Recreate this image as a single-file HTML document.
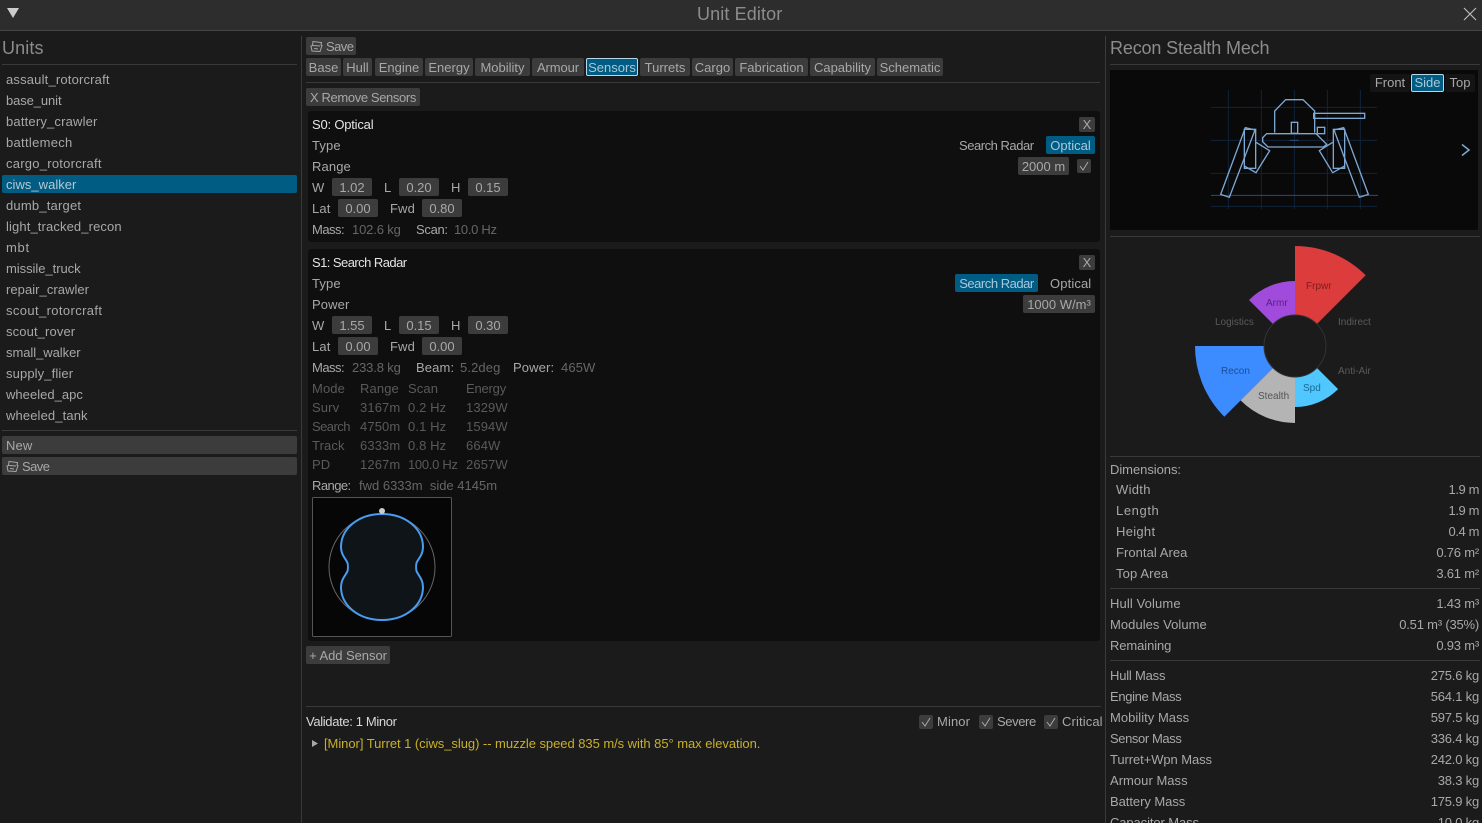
<!DOCTYPE html>
<html><head><meta charset="utf-8"><title>Unit Editor</title>
<style>
html,body{margin:0;padding:0;background:#1b1b1b;width:1482px;height:823px;overflow:hidden}
#r{position:relative;width:1482px;height:823px;overflow:hidden;font:13px/20px "Liberation Sans",sans-serif;color:#a8a8a8}
#r div,#r span,#r svg{position:absolute}
span{white-space:nowrap;letter-spacing:.12px;margin-top:1px}
.b{background:#3c3c3c;border-radius:2px;height:18px;line-height:20px;text-align:center;color:#a8a8a8;overflow:hidden}
.l{background:#3a3a3a;height:1px}
.p{background:#0f0f0f;border-radius:3px}
.w{color:#666}
.f{color:#5a5a5a}
.h{font-size:18px;color:#8c8c8c;margin-top:0}
.n{color:#e4e4e4}
.rt{right:3px;letter-spacing:-.2px}
.c{background:#3c3c3c;border-radius:2px;width:14px;height:14px}
</style></head><body><div id="r">
<div style="left:0;top:0;width:1482px;height:30px;background:#2d2d2d"></div>
<div style="left:0;top:30px;width:1482px;height:1px;background:#444"></div>
<svg style="left:6px;top:7px" width="14" height="12"><path d="M1 1H13L7 11Z" fill="#ccc"/></svg>
<span class="h" style="left:697px;top:4px">Unit Editor</span>
<svg style="left:1463px;top:7px" width="14" height="14"><path d="M1 1L13 13M13 1L1 13" stroke="#bbb" stroke-width="1.2"/></svg>

<div style="left:301px;top:36px;width:1px;height:787px;background:#3a3a3a"></div>
<div style="left:1105px;top:36px;width:1px;height:787px;background:#3a3a3a"></div>

<span class="h" style="left:2px;top:38px">Units</span>
<div class="l" style="left:2px;top:64px;width:295px"></div>
<div style="left:2px;top:175px;width:295px;height:18px;background:#005c82;border-radius:2px"></div>
<span style="left:6px;top:69px;letter-spacing:.18px">assault_rotorcraft</span>
<span style="left:6px;top:90px;letter-spacing:-.1px">base_unit</span>
<span style="left:6px;top:111px;letter-spacing:.18px">battery_crawler</span>
<span style="left:6px;top:132px;letter-spacing:.3px">battlemech</span>
<span style="left:6px;top:153px;letter-spacing:.25px">cargo_rotorcraft</span>
<span style="left:6px;top:174px;color:#b4c8d4;letter-spacing:.03px">ciws_walker</span>
<span style="left:6px;top:195px;letter-spacing:.2px">dumb_target</span>
<span style="left:6px;top:216px">light_tracked_recon</span>
<span style="left:6px;top:237px;letter-spacing:.7px">mbt</span>
<span style="left:6px;top:258px;letter-spacing:-.04px">missile_truck</span>
<span style="left:6px;top:279px;letter-spacing:.05px">repair_crawler</span>
<span style="left:6px;top:300px;letter-spacing:.38px">scout_rotorcraft</span>
<span style="left:6px;top:321px">scout_rover</span>
<span style="left:6px;top:342px;letter-spacing:-.05px">small_walker</span>
<span style="left:6px;top:363px">supply_flier</span>
<span style="left:6px;top:384px;letter-spacing:.03px">wheeled_apc</span>
<span style="left:6px;top:405px">wheeled_tank</span>
<div class="l" style="left:2px;top:430px;width:295px"></div>
<div class="b" style="left:2px;top:436px;width:295px"></div>
<span style="left:6px;top:435px">New</span>
<div class="b" style="left:2px;top:457px;width:295px"></div>
<svg style="left:6px;top:460px" width="13" height="13"><path d="M3 1.500L11.500 2.500 11 5 12 5.500 10 11.500 2 11 1 6 2.500 5.500ZM3 5.500L10 6M4 8.500L8 9" fill="none" stroke="#a8a8a8"/></svg>
<span style="left:22px;top:456px;letter-spacing:-.55px">Save</span>

<div class="b" style="left:306px;top:37px;width:50px"></div>
<svg style="left:310px;top:40px" width="13" height="13"><path d="M3 1.500L11.500 2.500 11 5 12 5.500 10 11.500 2 11 1 6 2.500 5.500ZM3 5.500L10 6M4 8.500L8 9" fill="none" stroke="#a8a8a8"/></svg>
<span style="left:326px;top:36px;letter-spacing:-.55px">Save</span>
<div class="b" style="left:306px;top:58px;width:35px">Base</div>
<div class="b" style="left:343px;top:58px;width:29px">Hull</div>
<div class="b" style="left:375px;top:58px;width:48px">Engine</div>
<div class="b" style="left:425px;top:58px;width:48px">Energy</div>
<div class="b" style="left:475px;top:58px;width:55px">Mobility</div>
<div class="b" style="left:532px;top:58px;width:52px;letter-spacing:-.1px">Armour</div>
<div class="b" style="left:586px;top:58px;width:50px;height:16px;line-height:18px;background:#005c82;border:1px solid #b8d8ea;color:#a8c8dc">Sensors</div>
<div class="b" style="left:640px;top:58px;width:50px">Turrets</div>
<div class="b" style="left:692px;top:58px;width:41px">Cargo</div>
<div class="b" style="left:735px;top:58px;width:73px">Fabrication</div>
<div class="b" style="left:810px;top:58px;width:65px">Capability</div>
<div class="b" style="left:877px;top:58px;width:66px">Schematic</div>
<div class="l" style="left:306px;top:82px;width:794px"></div>
<div class="b" style="left:306px;top:88px;width:114px;letter-spacing:-.38px">X Remove Sensors</div>

<div class="p" style="left:308px;top:111px;width:792px;height:131px"></div>
<span class="n" style="left:312px;top:114px;letter-spacing:-.2px">S0: Optical</span>
<div class="b" style="left:1079px;top:117px;width:16px;height:15px;line-height:15px">X</div>
<span style="left:312px;top:135px">Type</span>
<span style="left:959px;top:135px;letter-spacing:-.47px">Search Radar</span>
<div class="b" style="left:1046px;top:136px;width:49px;background:#005c82;color:#a8c8dc">Optical</div>
<span style="left:312px;top:156px">Range</span>
<div class="b" style="left:1018px;top:157px;width:51px">2000 m</div>
<div class="c" style="left:1077px;top:159px"></div>
<svg style="left:1077px;top:159px" width="14" height="14"><path d="M3 7L6 11 11 3" fill="none" stroke="#a8a8a8"/></svg>
<span style="left:312px;top:177px">W</span>
<div class="b" style="left:332px;top:178px;width:40px">1.02</div>
<span style="left:384px;top:177px">L</span>
<div class="b" style="left:399px;top:178px;width:40px">0.20</div>
<span style="left:451px;top:177px">H</span>
<div class="b" style="left:468px;top:178px;width:40px">0.15</div>
<span style="left:312px;top:198px">Lat</span>
<div class="b" style="left:338px;top:199px;width:40px">0.00</div>
<span style="left:390px;top:198px">Fwd</span>
<div class="b" style="left:422px;top:199px;width:40px">0.80</div>
<span style="left:312px;top:219px;letter-spacing:-.5px">Mass:</span>
<span class="w" style="left:352px;top:219px;letter-spacing:-.15px">102.6 kg</span>
<span style="left:416px;top:219px;letter-spacing:-.3px">Scan:</span>
<span class="w" style="left:454px;top:219px;letter-spacing:-.3px">10.0 Hz</span>

<div class="p" style="left:308px;top:249px;width:792px;height:392px"></div>
<span class="n" style="left:312px;top:252px;letter-spacing:-.55px">S1: Search Radar</span>
<div class="b" style="left:1079px;top:255px;width:16px;height:15px;line-height:15px">X</div>
<span style="left:312px;top:273px">Type</span>
<div class="b" style="left:955px;top:274px;width:83px;background:#005c82;color:#a8c8dc;letter-spacing:-.47px">Search Radar</div>
<span style="left:1050px;top:273px">Optical</span>
<span style="left:312px;top:294px">Power</span>
<div class="b" style="left:1023px;top:295px;width:72px">1000 W/m³</div>
<span style="left:312px;top:315px">W</span>
<div class="b" style="left:332px;top:316px;width:40px">1.55</div>
<span style="left:384px;top:315px">L</span>
<div class="b" style="left:399px;top:316px;width:40px">0.15</div>
<span style="left:451px;top:315px">H</span>
<div class="b" style="left:468px;top:316px;width:40px">0.30</div>
<span style="left:312px;top:336px">Lat</span>
<div class="b" style="left:338px;top:337px;width:40px">0.00</div>
<span style="left:390px;top:336px">Fwd</span>
<div class="b" style="left:422px;top:337px;width:40px">0.00</div>
<span style="left:312px;top:357px;letter-spacing:-.5px">Mass:</span>
<span class="w" style="left:352px;top:357px;letter-spacing:-.15px">233.8 kg</span>
<span style="left:416px;top:357px">Beam:</span>
<span class="w" style="left:460px;top:357px">5.2deg</span>
<span style="left:513px;top:357px">Power:</span>
<span class="w" style="left:561px;top:357px">465W</span>
<span class="f" style="left:312px;top:378px">Mode</span><span class="f" style="left:360px;top:378px">Range</span><span class="f" style="left:408px;top:378px">Scan</span><span class="f" style="left:466px;top:378px;letter-spacing:-.2px">Energy</span>
<span class="f" style="left:312px;top:397px">Surv</span><span class="f" style="left:360px;top:397px">3167m</span><span class="f" style="left:408px;top:397px">0.2 Hz</span><span class="f" style="left:466px;top:397px">1329W</span>
<span class="f" style="left:312px;top:416px;letter-spacing:-.55px">Search</span><span class="f" style="left:360px;top:416px">4750m</span><span class="f" style="left:408px;top:416px">0.1 Hz</span><span class="f" style="left:466px;top:416px">1594W</span>
<span class="f" style="left:312px;top:435px">Track</span><span class="f" style="left:360px;top:435px">6333m</span><span class="f" style="left:408px;top:435px">0.8 Hz</span><span class="f" style="left:466px;top:435px">664W</span>
<span class="f" style="left:312px;top:454px">PD</span><span class="f" style="left:360px;top:454px">1267m</span><span class="f" style="left:408px;top:454px;letter-spacing:-.3px">100.0 Hz</span><span class="f" style="left:466px;top:454px">2657W</span>
<span style="left:312px;top:475px;letter-spacing:-.55px">Range:</span>
<span class="w" style="left:359px;top:475px;letter-spacing:0">fwd 6333m&nbsp; side 4145m</span>

<svg style="left:312px;top:497px" width="140" height="140" viewBox="312 497 140 140">
<rect x="312.500" y="497.500" width="139" height="139" rx="1" fill="#060606" stroke="#555"/>
<circle cx="382" cy="567" r="53" fill="none" stroke="#666"/>
<path d="M382 514C406 514 423 529 423 547C423 555 418 559 416.500 563C416 565 416 569 416.500 571C418 575 423 579 423 587C423 605 406 620 382 620C358 620 341 605 341 587C341 579 346 575 347.500 571C348 569 348 565 347.500 563C346 559 341 555 341 547C341 529 358 514 382 514Z" fill="#0e1418" stroke="#4a9cf0" stroke-width="2"/>
<circle cx="382" cy="511" r="3" fill="#ccc"/>
</svg>
<div class="b" style="left:306px;top:646px;width:84px;letter-spacing:-.05px">+ Add Sensor</div>

<div class="l" style="left:306px;top:706px;width:795px"></div>
<span style="left:306px;top:711px;color:#d8d8d8;letter-spacing:-.35px">Validate: 1 Minor</span>
<div class="c" style="left:919px;top:715px"></div>
<svg style="left:919px;top:715px" width="14" height="14"><path d="M3 7L6 11 11 3" fill="none" stroke="#a8a8a8"/></svg>
<span style="left:937px;top:711px">Minor</span>
<div class="c" style="left:979px;top:715px"></div>
<svg style="left:979px;top:715px" width="14" height="14"><path d="M3 7L6 11 11 3" fill="none" stroke="#a8a8a8"/></svg>
<span style="left:997px;top:711px;letter-spacing:-.4px">Severe</span>
<div class="c" style="left:1044px;top:715px"></div>
<svg style="left:1044px;top:715px" width="14" height="14"><path d="M3 7L6 11 11 3" fill="none" stroke="#a8a8a8"/></svg>
<span style="left:1062px;top:711px">Critical</span>
<svg style="left:312px;top:740px" width="7" height="7"><path d="M0 0L6 3.500 0 7Z" fill="#a8a8a8"/></svg>
<span style="left:324px;top:733px;color:#c8b028;letter-spacing:-.05px">[Minor] Turret 1 (ciws_slug) -- muzzle speed 835 m/s with 85° max elevation.</span>

<span class="h" style="left:1110px;top:38px;letter-spacing:-.15px">Recon Stealth Mech</span>
<div class="l" style="left:1110px;top:64px;width:370px"></div>
<div style="left:1110px;top:70px;width:368px;height:160px;background:#090909"></div>
<svg style="left:1200px;top:85px" width="190" height="130" viewBox="0 0 570 390" fill="none">
<path d="M85 15V372M184 15V372M283 15V372M382 15V372M481 15V372M33 67H531M33 166H531M33 265H531M33 364H531" stroke="#12233a" stroke-width="3"/>
<path d="M33 331H534" stroke="#2c4a78" stroke-width="3"/>
<path d="M269 166H297" stroke="#2c4a78" stroke-width="3"/>
<g stroke="#7ea8d4" stroke-width="4">
<path d="M224 143V78L257 44H309L344 78V143"/>
<rect x="341" y="85" width="153" height="15"/>
<rect x="274" y="112" width="19" height="33"/>
<rect x="352" y="127" width="22" height="19"/>
<path d="M200 146H348L380 178 370 186H204L188 170V158Z"/>
<rect x="133" y="133" width="34" height="117"/>
<path d="M136 128L165 135 88 337 62 328Z"/>
<path d="M168 172L209 197 168 263 133 243"/>
<rect x="400" y="133" width="34" height="117"/>
<path d="M431 128L402 135 478 337 505 328Z"/>
<path d="M398 172L358 197 398 263 434 243"/>
</g>
</svg>
<div class="b" style="left:1370px;top:74px;width:40px;background:#141414;line-height:18px">Front</div>
<div class="b" style="left:1411px;top:74px;width:31px;height:16px;line-height:16px;background:#005c82;border:1px solid #b8d8ea;color:#a8c8dc">Side</div>
<div class="b" style="left:1445px;top:74px;width:30px;background:#141414;line-height:18px">Top</div>
<svg style="left:1460px;top:143px" width="12" height="14"><path d="M2 1.500L9 7 2 12.500" fill="none" stroke="#7ea8d4" stroke-width="1.500"/></svg>
<div class="l" style="left:1110px;top:236px;width:370px"></div>

<svg style="left:1180px;top:240px" width="210" height="190" viewBox="1180 240 210 190" font-family="Liberation Sans,sans-serif" font-size="10">
<path d="M1295 246A100 100 0 0 1 1365.700 275.300L1295 346Z" fill="#dc3c3c"/>
<path d="M1249 300A65 65 0 0 1 1295 281L1295 346Z" fill="#a04bdc"/>
<path d="M1195 346A100 100 0 0 0 1224.300 416.700L1295 346Z" fill="#3c8cff"/>
<path d="M1240.600 400.400A77 77 0 0 0 1295 423L1295 346Z" fill="#b4b4b4"/>
<path d="M1295 407A61 61 0 0 0 1338.100 389.100L1295 346Z" fill="#50c8ff"/>
<circle cx="1295" cy="346" r="31" fill="#1b1b1b" stroke="#333"/>
<text x="1306" y="289" fill="#7a1e1e">Frpwr</text>
<text x="1266" y="306" fill="#5a2080">Armr</text>
<text x="1221" y="374" fill="#1a4f94">Recon</text>
<text x="1258" y="399" fill="#555">Stealth</text>
<text x="1303" y="391" fill="#1a6a90">Spd</text>
<text x="1215" y="325" fill="#5a5a5a">Logistics</text>
<text x="1338" y="325" fill="#5a5a5a">Indirect</text>
<text x="1338" y="374" fill="#5a5a5a">Anti-Air</text>
</svg>
<div class="l" style="left:1110px;top:456px;width:370px"></div>

<span style="left:1110px;top:459px;letter-spacing:-.05px">Dimensions:</span>
<span style="left:1116px;top:479px;letter-spacing:.3px">Width</span><span class="rt" style="top:479px;letter-spacing:-.4px">1.9 m</span>
<span style="left:1116px;top:500px;letter-spacing:.6px">Length</span><span class="rt" style="top:500px;letter-spacing:-.4px">1.9 m</span>
<span style="left:1116px;top:521px;letter-spacing:.3px">Height</span><span class="rt" style="top:521px;letter-spacing:-.4px">0.4 m</span>
<span style="left:1116px;top:542px;letter-spacing:.05px">Frontal Area</span><span class="rt" style="top:542px">0.76 m²</span>
<span style="left:1116px;top:563px">Top Area</span><span class="rt" style="top:563px">3.61 m²</span>
<div class="l" style="left:1110px;top:588px;width:370px"></div>
<span style="left:1110px;top:593px">Hull Volume</span><span class="rt" style="top:593px">1.43 m³</span>
<span style="left:1110px;top:614px;letter-spacing:.05px">Modules Volume</span><span class="rt" style="top:614px;letter-spacing:-.2px">0.51 m³ (35%)</span>
<span style="left:1110px;top:635px;letter-spacing:-.1px">Remaining</span><span class="rt" style="top:635px">0.93 m³</span>
<div class="l" style="left:1110px;top:660px;width:370px"></div>
<span style="left:1110px;top:665px;letter-spacing:-.2px">Hull Mass</span><span class="rt" style="top:665px">275.6 kg</span>
<span style="left:1110px;top:686px;letter-spacing:-.35px">Engine Mass</span><span class="rt" style="top:686px">564.1 kg</span>
<span style="left:1110px;top:707px;letter-spacing:.03px">Mobility Mass</span><span class="rt" style="top:707px">597.5 kg</span>
<span style="left:1110px;top:728px;letter-spacing:-.4px">Sensor Mass</span><span class="rt" style="top:728px">336.4 kg</span>
<span style="left:1110px;top:749px;letter-spacing:-.08px">Turret+Wpn Mass</span><span class="rt" style="top:749px">242.0 kg</span>
<span style="left:1110px;top:770px;letter-spacing:.03px">Armour Mass</span><span class="rt" style="top:770px">38.3 kg</span>
<span style="left:1110px;top:791px;letter-spacing:-.05px">Battery Mass</span><span class="rt" style="top:791px">175.9 kg</span>
<span style="left:1110px;top:812px;letter-spacing:-.1px">Capacitor Mass</span><span class="rt" style="top:812px">10.0 kg</span>
</div></body></html>
